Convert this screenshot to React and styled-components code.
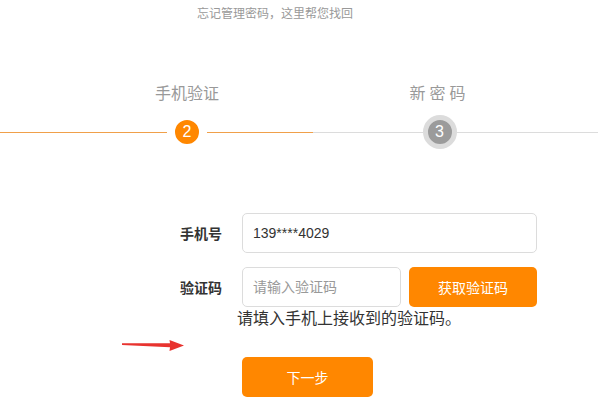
import React from "react";
import styled, { createGlobalStyle } from "styled-components";

const ORANGE = "#ff8700";

const GlobalStyle = createGlobalStyle`
  body {
    margin: 0;
    background: #fff;
    font-family: "Liberation Sans", "Noto Sans CJK SC", sans-serif;
  }
`;

const Page = styled.div`
  position: relative;
  width: 598px;
  height: 400px;
  overflow: hidden;
  padding-top: 4px;
  box-sizing: border-box;
`;

const Subtitle = styled.div`
  padding-left: 197px;
  font-size: 12px;
  line-height: 20px;
  color: #999;
`;

const Steps = styled.div`
  margin-top: 60px;
  display: grid;
  grid-template-columns: 61px 252px 253px 1fr;
`;

const StepCol = styled.div`
  display: flex;
  flex-direction: column;
  gap: 8px;
`;

const StepLabel = styled.div`
  height: 20px;
  line-height: 20px;
  text-align: center;
  font-size: 16px;
  color: #999;
  letter-spacing: ${(p) => p.$spacing || 0}px;
`;

const Rail = styled.div`
  display: flex;
  align-items: center;
  height: 40px;
`;

const Line = styled.div`
  flex: 1;
  height: 1px;
  background: ${(p) => (p.$done ? "#f0a04a" : "#dcdcdc")};
`;

const Node = styled.div`
  width: 24px;
  height: 24px;
  border-radius: 50%;
  background: ${(p) => (p.$active ? ORANGE : "#9b9b9b")};
  border: ${(p) => (p.$active ? "8px solid #fff" : "5px solid #dcdcdc")};
  color: #fff;
  font-size: 16px;
  line-height: 24px;
  text-align: center;
`;

const Form = styled.div`
  margin-top: 61px;
  padding-left: 162px;
  display: flex;
  flex-direction: column;
`;

const Row = styled.div`
  display: flex;
  align-items: center;
  gap: 20px;
  margin-top: ${(p) => p.$top || 0}px;
`;

const Label = styled.div`
  width: 60px;
  text-align: right;
  font-size: 14px;
  font-weight: bold;
  color: #333;
`;

const Input = styled.input`
  box-sizing: border-box;
  width: ${(p) => p.$width}px;
  height: 40px;
  padding: 0 10px;
  border: 1px solid #dcdcdc;
  border-radius: 5px;
  font-family: inherit;
  font-size: 14px;
  color: #333;
  outline: none;
  &::placeholder {
    color: #999;
  }
`;

const CodeGroup = styled.div`
  display: flex;
  gap: 8px;
`;

const OrangeButton = styled.button`
  width: ${(p) => p.$width}px;
  height: ${(p) => p.$height}px;
  border: none;
  border-radius: 5px;
  background: ${ORANGE};
  color: #fff;
  font-family: inherit;
  font-size: 14px;
  cursor: pointer;
`;

const Hint = styled.div`
  margin: 2px 0 0 75px;
  font-size: 16px;
  line-height: 20px;
  color: #333;
`;

const NextWrap = styled.div`
  margin: 28px 0 0 80px;
`;

const Arrow = styled.svg`
  position: absolute;
  left: 120px;
  top: 334px;
`;

function App() {
  return (
    <Page>
      <GlobalStyle />
      <Subtitle>忘记管理密码，这里帮您找回</Subtitle>

      <Steps>
        <StepCol>
          <StepLabel />
          <Rail>
            <Line $done />
          </Rail>
        </StepCol>
        <StepCol>
          <StepLabel>手机验证</StepLabel>
          <Rail>
            <Line $done />
            <Node $active>2</Node>
            <Line $done />
          </Rail>
        </StepCol>
        <StepCol>
          <StepLabel $spacing={4}>新密码</StepLabel>
          <Rail>
            <Line />
            <Node>3</Node>
            <Line />
          </Rail>
        </StepCol>
        <StepCol>
          <StepLabel />
          <Rail>
            <Line />
          </Rail>
        </StepCol>
      </Steps>

      <Form>
        <Row>
          <Label>手机号</Label>
          <Input $width={295} defaultValue="139****4029" />
        </Row>
        <Row $top={14}>
          <Label>验证码</Label>
          <CodeGroup>
            <Input $width={159} placeholder="请输入验证码" />
            <OrangeButton $width={128} $height={40}>获取验证码</OrangeButton>
          </CodeGroup>
        </Row>
        <Hint>请填入手机上接收到的验证码。</Hint>
        <NextWrap>
          <OrangeButton $width={131} $height={40}>下一步</OrangeButton>
        </NextWrap>
      </Form>

      <Arrow width="68" height="20" viewBox="0 0 68 20">
        <polygon points="2,9.3 50,9.3 49.5,6 64,11.5 49.5,17 50,13.3 2,10.9" fill="#e8332f" />
      </Arrow>
    </Page>
  );
}

export default App;
